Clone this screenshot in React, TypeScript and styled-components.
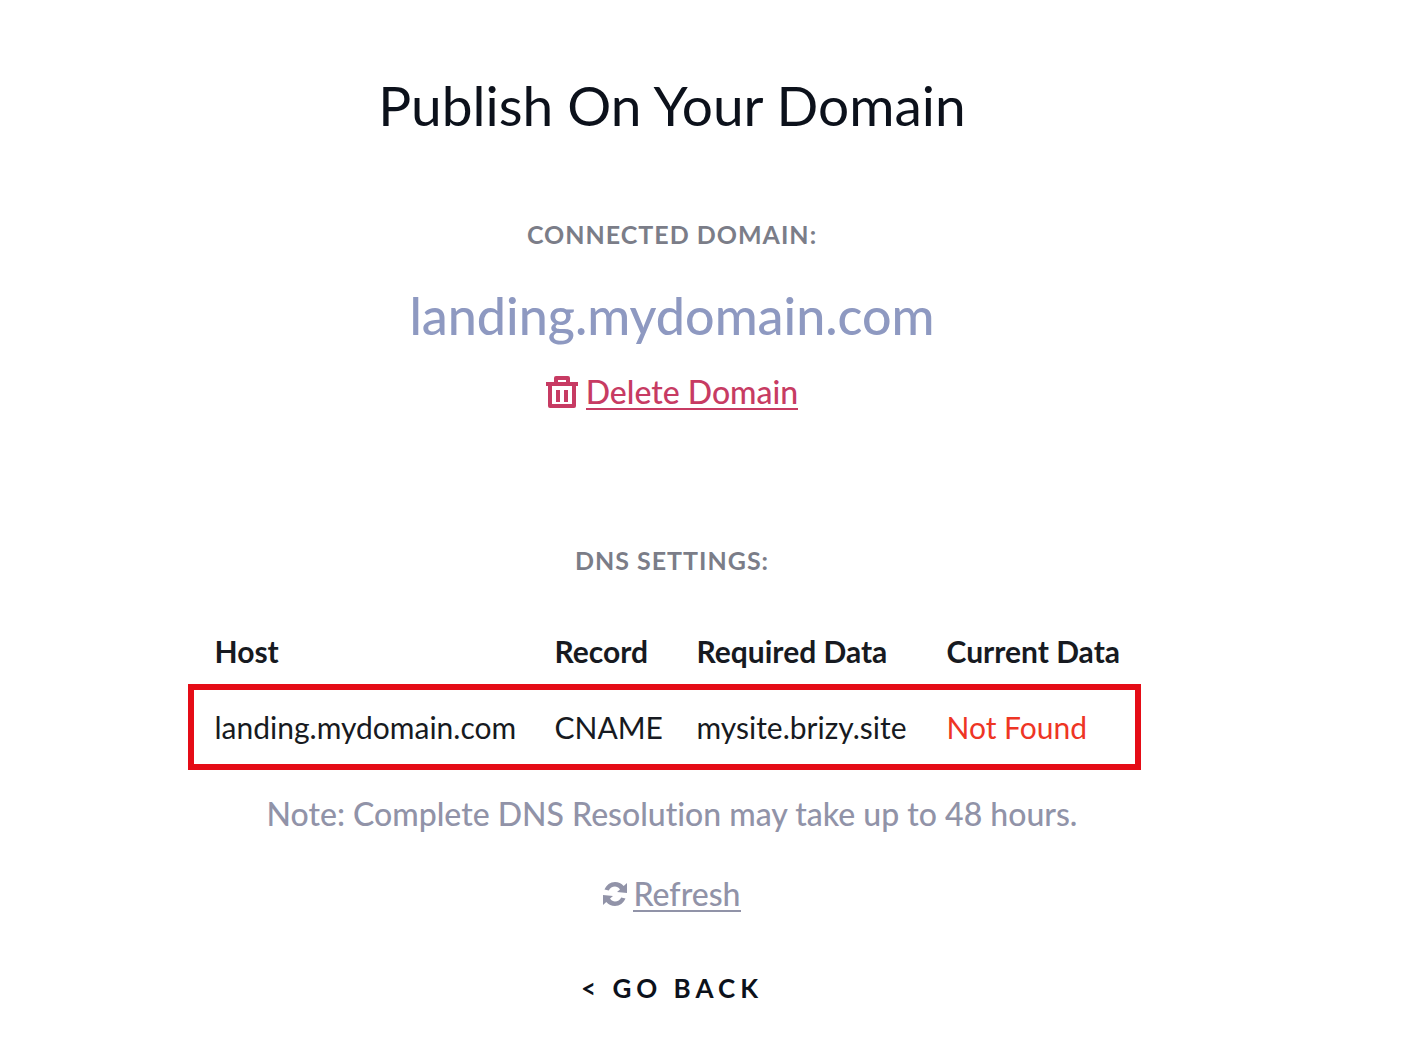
import type { FC } from 'react';
import styled, { createGlobalStyle } from 'styled-components';

const records = [
  {
    host: 'landing.mydomain.com',
    record: 'CNAME',
    required: 'mysite.brizy.site',
    current: 'Not Found',
    found: false,
  },
];

const App: FC = () => {
  return (
    <>
      <GlobalStyle />
      <Page>
        <Title>Publish On Your Domain</Title>

        <Section>
          <SectionLabel>CONNECTED DOMAIN:</SectionLabel>
          <DomainName>landing.mydomain.com</DomainName>
          <ActionLink href='#delete' $color='#c73b63' $gap={8}>
            <TrashIcon />
            <span>Delete Domain</span>
          </ActionLink>
        </Section>

        <DnsSection>
          <SectionLabel>DNS SETTINGS:</SectionLabel>
          <DnsTable>
            <colgroup>
              <HostCol />
              <RecordCol />
              <RequiredCol />
              <col />
            </colgroup>
            <thead>
              <tr>
                <HeadCell scope='col'>Host</HeadCell>
                <HeadCell scope='col'>Record</HeadCell>
                <HeadCell scope='col'>Required Data</HeadCell>
                <HeadCell scope='col'>Current Data</HeadCell>
              </tr>
            </thead>
            <RecordsBody>
              {records.map(({ host, record, required, current, found }) => (
                <tr key={host}>
                  <Cell>{host}</Cell>
                  <Cell>{record}</Cell>
                  <Cell>{required}</Cell>
                  <Cell $error={!found}>{current}</Cell>
                </tr>
              ))}
            </RecordsBody>
          </DnsTable>
          <Note>Note: Complete DNS Resolution may take up to 48 hours.</Note>
          <ActionLink href='#refresh' $color='#9193a8' $gap={6}>
            <RefreshIcon />
            <span>Refresh</span>
          </ActionLink>
        </DnsSection>

        <BackButton type='button'>&lt; GO BACK</BackButton>
      </Page>
    </>
  );
};

const TrashIcon: FC = () => (
  <svg width='32' height='32' viewBox='0 0 32 32' fill='currentColor' aria-hidden='true'>
    <path
      fillRule='evenodd'
      d='M10 0h12a2 2 0 0 1 2 2v4h8v4h-2v20a2 2 0 0 1-2 2H4a2 2 0 0 1-2-2V10H0V6h8V2a2 2 0 0 1 2-2zm2 4v2h8V4zM6 10v18h20V10zm4 4h4v12h-4zm8 0h4v12h-4z'
    />
  </svg>
);

const RefreshIcon: FC = () => (
  <svg width='24' height='24' viewBox='0 0 24 24' fill='currentColor' aria-hidden='true'>
    <path d='M24 1v10l-10-1 3-2.500C15.500 5.300 13.800 4.500 12 4.500c-2.700 0-5 1.500-6.200 4L1.500 7.500C3.400 3 7.300 0 12 0c3.400 0 6.500 1.400 8.700 3.900z' />
    <path d='M0 23V13l10 1-3 2.500c1.500 2.200 3.200 3 5 3 2.700 0 5-1.500 6.200-4l4.300 1C20.600 21 16.700 24 12 24c-3.400 0-6.500-1.400-8.700-3.900z' />
  </svg>
);

const GlobalStyle = createGlobalStyle`
  * {
    box-sizing: border-box;
  }

  body {
    margin: 0;
    background: #fff;
    color: #171a21;
    font-family: Lato, 'Liberation Sans', sans-serif;
    font-size: 30px;
    font-variant-ligatures: none;
    line-height: 40px;
  }
`;

const Page = styled.main`
  display: flex;
  flex-direction: column;
  align-items: center;
  padding: 73px 62px 48px 0;
`;

const Title = styled.h1`
  margin: 0;
  color: #0c111b;
  font-size: 55px;
  font-weight: 400;
  line-height: 64px;
`;

const Section = styled.section`
  display: flex;
  flex-direction: column;
  align-items: center;
  margin-top: 81px;
`;

const DnsSection = styled(Section)`
  margin-top: 132px;
`;

const SectionLabel = styled.h2`
  margin: 0;
  color: #7b7d88;
  font-size: 25px;
  font-weight: 700;
  letter-spacing: 1px;
  line-height: 32px;
`;

const DomainName = styled.p`
  margin: 33px 0 25px;
  color: #8e99c1;
  font-size: 52px;
  font-weight: 500;
  line-height: 64px;
`;

const ActionLink = styled.a<{ $color: string; $gap: number }>`
  display: flex;
  align-items: center;
  gap: ${({ $gap }) => $gap}px;
  height: 40px;
  color: ${({ $color }) => $color};
  font-size: 32px;
  font-weight: 500;
  text-decoration: none;

  span {
    padding-top: 2px;
    border-bottom: 2px solid currentColor;
    line-height: 32px;
  }
`;

const DnsTable = styled.table`
  width: 953px;
  max-width: 100%;
  margin: 55px 16px 0 0;
  border-collapse: collapse;
  table-layout: fixed;
  text-align: left;
`;

const HostCol = styled.col`
  width: 364px;
`;

const RecordCol = styled.col`
  width: 142px;
`;

const RequiredCol = styled.col`
  width: 250px;
`;

const HeadCell = styled.th`
  padding: 0 0 13px;
  font-weight: 700;
  white-space: nowrap;

  &:first-child {
    padding-left: 24px;
  }
`;

const RecordsBody = styled.tbody`
  border: 6px solid #e50c16;
`;

const Cell = styled.td<{ $error?: boolean }>`
  padding: 17px 0;
  color: ${({ $error }) => ($error ? '#ee3524' : 'inherit')};
  white-space: nowrap;

  &:first-child {
    padding-left: 21px;
  }
`;

const Note = styled.p`
  margin: 24px 0 40px;
  color: #9193a8;
  font-size: 32px;
  font-weight: 500;
`;

const BackButton = styled.button`
  margin-top: 58px;
  padding: 0;
  border: 0;
  background: none;
  color: #0c111b;
  font-family: inherit;
  font-size: 26px;
  font-weight: 700;
  letter-spacing: 5px;
  line-height: 32px;
  cursor: pointer;
`;

export default App;
